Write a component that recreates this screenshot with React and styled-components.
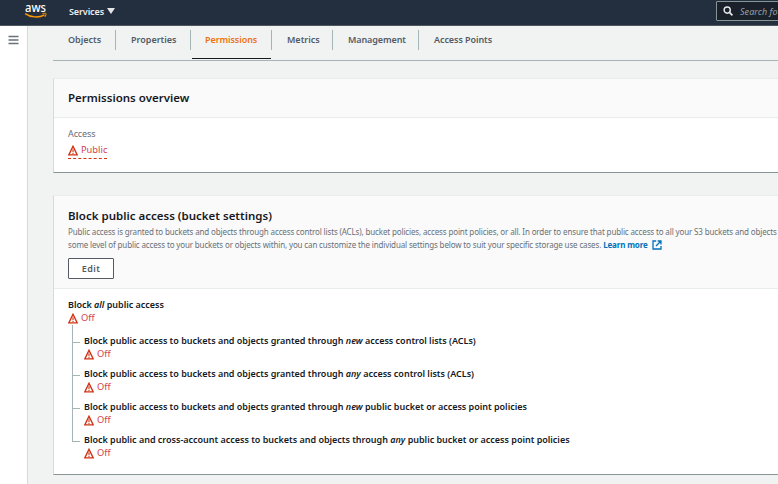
import React from "react";
import styled, { createGlobalStyle } from "styled-components";

const Global = createGlobalStyle`
  * { box-sizing: border-box; }
  html, body { margin: 0; padding: 0; background: #f1f3f3; }
  body { font-family: "Noto Sans", "Open Sans", sans-serif; color: #16191f; overflow: hidden; }
  h2, p, ul { margin: 0; padding: 0; }
  ul { list-style: none; }
  svg { display: block; flex: none; }
`;

const Page = styled.div`
  width: 778px;
  height: 484px;
  display: flex;
  flex-direction: column;
  overflow: hidden;
`;

const TopBar = styled.header`
  flex: none;
  height: 26px;
  display: flex;
  align-items: flex-start;
  background: #232f3e;
  border-bottom: 1px solid #50565f;
`;

const Logo = styled.svg`
  margin: 0 0 0 24px;
  overflow: visible;
`;

const ServicesMenu = styled.div`
  display: flex;
  align-items: center;
  gap: 3px;
  height: 22px;
  margin-left: 21px;
  color: #eceeef;
  font-size: 9px;
  font-weight: 600;
  letter-spacing: -0.1px;
`;

const SearchBox = styled.div`
  flex: none;
  display: flex;
  align-items: center;
  gap: 7px;
  width: 63px;
  height: 20px;
  margin: 1px -1px 0 auto;
  padding-left: 6px;
  border: 1px solid #879596;
  border-radius: 1px;
  background: #1a212b;
  color: #95a0a4;
  font-size: 9px;
  font-style: italic;
  letter-spacing: 0.05px;
  white-space: nowrap;
`;

const Body = styled.div`
  flex: 1;
  min-height: 0;
  display: flex;
`;

const SideRail = styled.nav`
  flex: none;
  width: 28px;
  padding: 9px 0 0 8px;
  background: #fff;
  border-right: 1px solid #d5dbdb;
`;

const Main = styled.main`
  flex: 1;
  min-width: 0;
  padding-left: 25px;
  overflow: hidden;
`;

const Tabs = styled.div`
  display: flex;
  height: 35px;
  border-bottom: 1px solid #a5b5b5;
`;

const Tab = styled.div`
  flex: none;
  width: ${(p) => p.$width}px;
  height: 33px;
  margin-left: 1px;
  padding: 4px 0 0 ${(p) => (p.$active ? 13 : 14)}px;
  border-bottom: 1px solid ${(p) => (p.$active ? "#16191f" : "transparent")};
  line-height: 20px;
  font-size: 9px;
  font-weight: 600;
  letter-spacing: ${(p) => p.$track ?? 0}px;
  white-space: nowrap;
  color: ${(p) => (p.$active ? "#ec7211" : "#545b64")};
`;

const TabDivider = styled.div`
  flex: none;
  width: 1px;
  height: 20px;
  margin-top: 4px;
  background: #a5b5b5;
`;

const Card = styled.section`
  width: 760px;
  height: ${(p) => p.$height}px;
  margin-top: ${(p) => p.$gap}px;
  background: #fff;
  border: 1px solid #d5dbdb;
  border-top-color: #eaeded;
  border-bottom-color: #879596;
`;

const CardHeader = styled.div`
  height: ${(p) => p.$height}px;
  padding: ${(p) => p.$top}px 0 0 14px;
  background: #fafafa;
  border-bottom: 1px solid #eaeded;
`;

const Title = styled.h2`
  height: 17px;
  line-height: 17px;
  font-size: 11.5px;
  font-weight: 600;
  white-space: nowrap;
`;

const Description = styled.p`
  padding-top: 1px;
  color: #687078;
`;

const Line = styled.span`
  display: flex;
  align-items: center;
  height: 13px;
  font-size: 8px;
  line-height: 13px;
  letter-spacing: ${(p) => p.$track}px;
  white-space: pre;
`;

const LearnMore = styled.span`
  display: flex;
  align-items: center;
  gap: 4px;
  color: #0073bb;
  font-weight: 700;
  letter-spacing: -0.15px;
`;

const EditButton = styled.button`
  display: block;
  width: 46px;
  height: 21px;
  margin-top: 7px;
  padding: 0;
  border: 1px solid #545b64;
  border-radius: 1px;
  background: #fff;
  color: #545b64;
  font: 600 9px/18px "Noto Sans", sans-serif;
  letter-spacing: 0.4px;
`;

const AccessField = styled.div`
  padding: 9px 0 0 14px;
`;

const FieldName = styled.div`
  height: 13px;
  line-height: 13px;
  font-size: 9px;
  letter-spacing: -0.1px;
  color: #687078;
`;

const Status = styled.div`
  display: flex;
  align-items: center;
  gap: 3px;
  height: 13px;
  color: #d13f4c;
  font-size: 9.3px;
  line-height: 13px;
  svg { margin-top: 2px; }
`;

const PublicStatus = styled(Status)`
  width: 39px;
  height: 16px;
  margin-top: 3px;
  padding-bottom: 2px;
  border-bottom: 1px dashed #d13212;
`;

const Settings = styled.div`
  padding: 9px 0 0 14px;
`;

const SettingName = styled.div`
  height: 13px;
  line-height: 13px;
  font-size: 9px;
  font-weight: 600;
  letter-spacing: -0.015px;
  white-space: nowrap;
`;

const Tree = styled.ul`
  padding: 10px 0 0 16px;
`;

const TreeItem = styled.li`
  position: relative;
  height: 33px;
  &::before {
    content: "";
    position: absolute;
    left: -12px;
    top: -25px;
    width: 7px;
    height: 33px;
    border-left: 1px solid #a5b5b5;
    border-bottom: 1px solid #a5b5b5;
  }
  &:first-child::before { top: -9px; height: 17px; }
`;

const WarningIcon = () => (
  <svg width="10" height="11" viewBox="0 0 10 11" fill="none" stroke="#d13212">
    <path d="M5 1.3 9.2 9.9H.8Z" strokeWidth="1.4" strokeLinejoin="miter" />
    <path d="M5 4.2V7M5 7.8V9" strokeWidth="1.1" />
  </svg>
);

const SearchIcon = () => (
  <svg width="10" height="10" viewBox="0 0 10 10" fill="none" stroke="#e8eaec">
    <circle cx="4.2" cy="4.1" r="3.1" strokeWidth="1.4" />
    <path d="m6.5 6.4 2.9 2.9" strokeWidth="1.7" />
  </svg>
);

const ExternalIcon = () => (
  <svg width="10" height="10" viewBox="0 0 10 10" fill="none" stroke="#0073bb" strokeWidth="1.3">
    <path d="M4.2 1H1v8h8V6M5.6 1H9v3.4M9 1 4 6" />
  </svg>
);

const settings = [
  ["Block public access to buckets and objects granted through ", "new", " access control lists (ACLs)"],
  ["Block public access to buckets and objects granted through ", "any", " access control lists (ACLs)"],
  ["Block public access to buckets and objects granted through ", "new", " public bucket or access point policies"],
  ["Block public and cross-account access to buckets and objects through ", "any", " public bucket or access point policies"],
];

const tabs = [
  { label: "Objects", width: 61 },
  { label: "Properties", width: 73 },
  { label: "Permissions", width: 79, active: true, track: -0.08 },
  { label: "Metrics", width: 59 },
  { label: "Management", width: 84, track: -0.1 },
  { label: "Access Points", width: 99, track: -0.08 },
];

export default function App() {
  return (
    <Page>
      <Global />
      <TopBar>
        <Logo width="24" height="20" viewBox="0 0 24 20">
          <text x="1" y="12" fontFamily="Noto Sans" fontSize="12.5" fontWeight="500" fill="#fff" textLength="21" lengthAdjust="spacingAndGlyphs">aws</text>
          <path d="M1.2 13.6C6.5 17.6 15 18 20.5 14.8" fill="none" stroke="#f90" strokeWidth="1.4" />
          <path d="M18.3 13.7c1.4-.5 3-.7 3.6-.2.5.5-.2 2.4-1.2 3.5" fill="none" stroke="#f90" strokeWidth="1" />
        </Logo>
        <ServicesMenu>
          Services
          <svg width="8" height="6" viewBox="0 0 8 6"><path d="M0 0h8L4 6Z" fill="#e3e5e7" /></svg>
        </ServicesMenu>
        <SearchBox><SearchIcon />Search fo</SearchBox>
      </TopBar>
      <Body>
        <SideRail>
          <svg width="11" height="10" viewBox="0 0 11 10" stroke="#687078" strokeWidth="1.5">
            <path d="M.5 1.5h10M.5 5h10M.5 8.5h10" />
          </svg>
        </SideRail>
        <Main>
          <Tabs>
            {tabs.map((t, i) => (
              <React.Fragment key={t.label}>
                {i > 0 && <TabDivider />}
                <Tab $width={t.width} $active={t.active} $track={t.track}>{t.label}</Tab>
              </React.Fragment>
            ))}
          </Tabs>
          <Card $gap={17} $height={95}>
            <CardHeader $height={39} $top={10}><Title>Permissions overview</Title></CardHeader>
            <AccessField>
              <FieldName>Access</FieldName>
              <PublicStatus><WarningIcon />Public</PublicStatus>
            </AccessField>
          </Card>
          <Card $gap={22} $height={280}>
            <CardHeader $height={93} $top={11}>
              <Title>Block public access (bucket settings)</Title>
              <Description>
                <Line $track={-0.137}>Public access is granted to buckets and objects through access control lists (ACLs), bucket policies, access point policies, or all. In order to ensure that public access to all your S3 buckets and objects</Line>
                <Line $track={-0.14}>some level of public access to your buckets or objects within, you can customize the individual settings below to suit your specific storage use cases. <LearnMore>Learn more<ExternalIcon /></LearnMore></Line>
              </Description>
              <EditButton>Edit</EditButton>
            </CardHeader>
            <Settings>
              <SettingName>Block <em>all</em> public access</SettingName>
              <Status><WarningIcon />Off</Status>
              <Tree>
                {settings.map(([before, word, after]) => (
                  <TreeItem key={before + word + after}>
                    <SettingName>{before}<em>{word}</em>{after}</SettingName>
                    <Status><WarningIcon />Off</Status>
                  </TreeItem>
                ))}
              </Tree>
            </Settings>
          </Card>
        </Main>
      </Body>
    </Page>
  );
}
